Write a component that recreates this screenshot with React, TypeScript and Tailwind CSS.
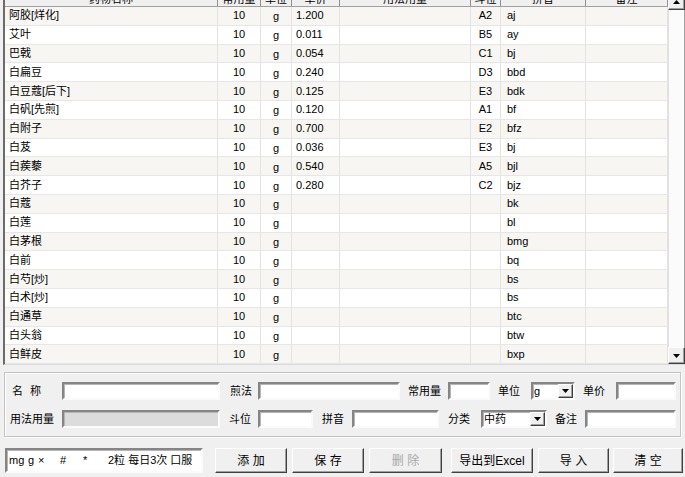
import React from "react";

const rows: string[][] = [
  ["阿胶[烊化]", "10", "g", "1.200", "", "A2", "aj", ""],
  ["艾叶", "10", "g", "0.011", "", "B5", "ay", ""],
  ["巴戟", "10", "g", "0.054", "", "C1", "bj", ""],
  ["白扁豆", "10", "g", "0.240", "", "D3", "bbd", ""],
  ["白豆蔻[后下]", "10", "g", "0.125", "", "E3", "bdk", ""],
  ["白矾[先煎]", "10", "g", "0.120", "", "A1", "bf", ""],
  ["白附子", "10", "g", "0.700", "", "E2", "bfz", ""],
  ["白芨", "10", "g", "0.036", "", "E3", "bj", ""],
  ["白蒺藜", "10", "g", "0.540", "", "A5", "bjl", ""],
  ["白芥子", "10", "g", "0.280", "", "C2", "bjz", ""],
  ["白蔻", "10", "g", "", "", "", "bk", ""],
  ["白莲", "10", "g", "", "", "", "bl", ""],
  ["白茅根", "10", "g", "", "", "", "bmg", ""],
  ["白前", "10", "g", "", "", "", "bq", ""],
  ["白芍[炒]", "10", "g", "", "", "", "bs", ""],
  ["白术[炒]", "10", "g", "", "", "", "bs", ""],
  ["白通草", "10", "g", "", "", "", "btc", ""],
  ["白头翁", "10", "g", "", "", "", "btw", ""],
  ["白鲜皮", "10", "g", "", "", "", "bxp", ""],
];

const cols = [
  { w: "w-[213px]", a: "justify-start pl-[4px]" },
  { w: "w-[43px]", a: "justify-center" },
  { w: "w-[31px]", a: "justify-center pt-[2px]" },
  { w: "w-[48px]", a: "justify-start pl-[4px]" },
  { w: "w-[131px]", a: "justify-start pl-[4px]" },
  { w: "w-[30px]", a: "justify-center" },
  { w: "w-[85px]", a: "justify-start pl-[6px]" },
  { w: "w-[82px]", a: "justify-start pl-[4px]" },
];

const headers = ["药物名称", "常用量", "单位", "单价", "用法用量", "斗位", "拼音", "备注"];

const sunken =
  "h-[18px] shrink-0 border-2 border-t-[#858585] border-l-[#858585] border-b-[#fbfbfb] border-r-[#fbfbfb] shadow-[inset_1px_1px_0_#b5b5b5]";

function Arrow({ down }: { down?: boolean }) {
  return (
    <svg width="7" height="4" viewBox="0 0 7 4">
      {down ? <polygon points="0,0 7,0 3.5,4" fill="#000" /> : <polygon points="0,4 7,4 3.5,0" fill="#000" />}
    </svg>
  );
}

function Select({ w, text }: { w: string; text: string }) {
  return (
    <div className={`${sunken} ${w} bg-white flex items-stretch`}>
      <div className="flex-1 flex items-center pl-[1px] text-[11px] leading-none">{text}</div>
      <div className="w-[15px] bg-[#f0f0f0] border border-t-white border-l-white border-r-[#404040] border-b-[#404040] shadow-[inset_-1px_-1px_0_#a0a0a0] flex items-center justify-center">
        <Arrow down />
      </div>
    </div>
  );
}

function Btn({ w, ml, children, disabled }: { w: string; ml: string; children: React.ReactNode; disabled?: boolean }) {
  return (
    <div
      className={`${w} ${ml} h-[25px] shrink-0 flex items-center justify-center bg-[#f0f0f0] border border-t-white border-l-white border-r-[#404040] border-b-[#404040] shadow-[inset_-1px_-1px_0_#a0a0a0] text-[12px] leading-none ${
        disabled ? "text-[#a8a8a8]" : "text-black"
      }`}
    >
      {children}
    </div>
  );
}

export default function App() {
  return (
    <div className="w-[685px] h-[477px] overflow-hidden bg-[#f0f0f0] font-['Liberation_Sans','Noto_Sans_CJK_SC',sans-serif] text-black text-[11px]">
      {/* Grid */}
      <div className="-mt-[12px] ml-[3px] flex border-l-2 border-l-[#6b6b6b] border-b border-b-[#dcdcdc] bg-white">
        <div className="flex flex-col">
          <div className="flex h-[19px] bg-[#f0f0f0] border-b border-[#a0a0a0]">
            {headers.map((h, i) => (
              <div
                key={i}
                className={`${cols[i].w} shrink-0 h-full flex items-end justify-center pb-[1px] border-r border-[#909090] text-[11px] leading-[11px]`}
              >
                {h}
              </div>
            ))}
          </div>
          {rows.map((r, ri) => (
            <div
              key={ri}
              className={`flex h-[18.8px] border-b border-[#e6e6e6] ${ri % 2 === 0 ? "bg-[#f7f6f2]" : "bg-white"}`}
            >
              {r.map((c, ci) => (
                <div
                  key={ci}
                  className={`${cols[ci].w} ${cols[ci].a} shrink-0 h-full flex items-center border-r border-[#e3e3e3] text-[11px] leading-none whitespace-nowrap`}
                >
                  {c}
                </div>
              ))}
            </div>
          ))}
        </div>
        {/* Scrollbar */}
        <div className="w-[17px] shrink-0 flex flex-col bg-white">
          <div className="h-[5px] shrink-0" />
          <div className="h-[17px] shrink-0 bg-[#f0f0f0] border border-t-white border-l-white border-r-[#404040] border-b-[#404040] shadow-[inset_-1px_-1px_0_#a0a0a0] flex items-center justify-center">
            <Arrow />
          </div>
          <div className="flex-1 bg-[#fbfbfb] border-l border-l-[#e0e0e0] border-r border-r-[#a0a0a0]" />
          <div className="h-[17px] shrink-0 bg-[#f0f0f0] border border-t-white border-l-white border-r-[#404040] border-b-[#404040] shadow-[inset_-1px_-1px_0_#a0a0a0] flex items-center justify-center">
            <Arrow down />
          </div>
        </div>
      </div>

      {/* Group box */}
      <div className="mx-[4px] mt-[7px] border border-[#c4c4c4] shadow-[inset_1px_1px_0_#ffffff,1px_1px_0_#ffffff] pt-[9px] pb-[8px] flex flex-col gap-[10px] text-[11px]">
        <div className="flex items-center h-[18px]">
          <div className="ml-[7px] w-[50px] shrink-0 flex leading-none">
            <span>名</span>
            <span className="ml-[7px]">称</span>
          </div>
          <div className={`${sunken} w-[158px] bg-white`} />
          <div className="ml-[10px] w-[24px] shrink-0 leading-none">煎法</div>
          <div className={`${sunken} ml-[4px] w-[142px] bg-white`} />
          <div className="ml-[8px] w-[36px] shrink-0 leading-none">常用量</div>
          <div className={`${sunken} ml-[4px] w-[42px] bg-white`} />
          <div className="ml-[8px] w-[24px] shrink-0 leading-none">单位</div>
          <div className="ml-[9px]">
            <Select w="w-[44px]" text="g" />
          </div>
          <div className="ml-[8px] w-[24px] shrink-0 leading-none">单价</div>
          <div className={`${sunken} ml-[9px] w-[60px] bg-white`} />
        </div>
        <div className="flex items-center h-[18px]">
          <div className="ml-[5px] w-[48px] shrink-0 leading-none">用法用量</div>
          <div className={`${sunken} ml-[4px] w-[158px] bg-[#dcdcdc]`} />
          <div className="ml-[9px] w-[24px] shrink-0 leading-none">斗位</div>
          <div className={`${sunken} ml-[5px] w-[55px] bg-white`} />
          <div className="ml-[9px] w-[24px] shrink-0 leading-none">拼音</div>
          <div className={`${sunken} ml-[6px] w-[87px] bg-white`} />
          <div className="ml-[9px] w-[24px] shrink-0 leading-none">分类</div>
          <div className="ml-[9px]">
            <Select w="w-[66px]" text="中药" />
          </div>
          <div className="ml-[8px] w-[24px] shrink-0 leading-none">备注</div>
          <div className={`${sunken} ml-[6px] w-[91px] bg-white`} />
        </div>
      </div>

      {/* Bottom row */}
      <div className="mt-[11px] flex items-center">
        <div className="ml-[5px] w-[198px] h-[25px] shrink-0 bg-white border-2 border-t-[#858585] border-l-[#858585] border-b-[#fbfbfb] border-r-[#fbfbfb] shadow-[inset_1px_1px_0_#b5b5b5] flex items-center text-[11px] leading-none whitespace-nowrap">
          <span className="ml-[2px] w-[19px] shrink-0">mg</span>
          <span className="w-[10px] shrink-0">g</span>
          <span className="w-[22px] shrink-0">×</span>
          <span className="w-[23px] shrink-0">#</span>
          <span className="w-[25px] shrink-0">*</span>
          <span>2粒 每日3次 口服</span>
        </div>
        <Btn w="w-[72px]" ml="ml-[12px]">添 加</Btn>
        <Btn w="w-[72px]" ml="ml-[5px]">保 存</Btn>
        <Btn w="w-[73px]" ml="ml-[5px]" disabled>删 除</Btn>
        <Btn w="w-[82px]" ml="ml-[9px]">导出到Excel</Btn>
        <Btn w="w-[71px]" ml="ml-[5px]">导 入</Btn>
        <Btn w="w-[70px]" ml="ml-[4px]">清 空</Btn>
      </div>
    </div>
  );
}
